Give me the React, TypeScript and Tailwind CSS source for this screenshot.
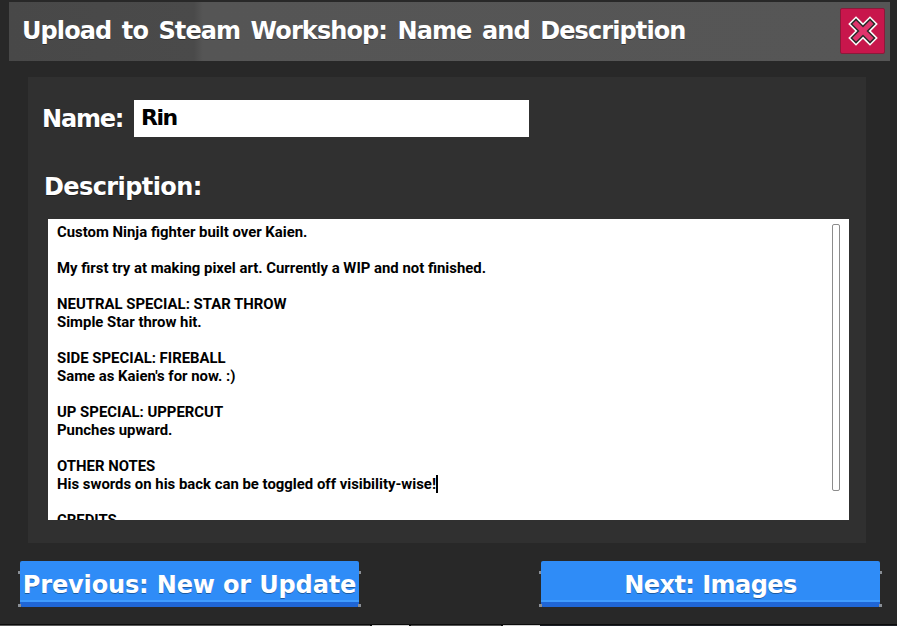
import React from 'react';

const pixelFont = "font-['DejaVu_Sans',sans-serif] font-bold [text-shadow:0_1px_0_rgba(0,0,0,0.35)]";

const descriptionLines = [
  'Custom Ninja fighter built over Kaien.',
  '',
  'My first try at making pixel art. Currently a WIP and not finished.',
  '',
  'NEUTRAL SPECIAL: STAR THROW',
  'Simple Star throw hit.',
  '',
  'SIDE SPECIAL: FIREBALL',
  "Same as Kaien's for now. :)",
  '',
  'UP SPECIAL: UPPERCUT',
  'Punches upward.',
  '',
  'OTHER NOTES',
];

const PixelButton = ({ label, tracking }: { label: string; tracking: string }) => (
  <button className="relative h-[46px] w-[339px] bg-[#2f8cf7] rounded-[2px] border-b-[5px] border-[#1f66d6] flex items-center justify-center">
    <span className={`${pixelFont} text-white text-[24px] leading-none whitespace-nowrap pt-[6px] ${tracking}`}>{label}</span>
    <span className="absolute left-0 right-0 bottom-0 h-[2px] bg-[#3f9cff]" />
    <span className="absolute -left-[2px] top-[10px] w-[2px] h-[3px] bg-[#8a8f96]" />
    <span className="absolute -right-[2px] top-[10px] w-[2px] h-[3px] bg-[#8a8f96]" />
    <span className="absolute -left-[2px] -bottom-[5px] w-[3px] h-[3px] bg-[#8a8f96]" />
    <span className="absolute -right-[2px] -bottom-[5px] w-[3px] h-[3px] bg-[#8a8f96]" />
  </button>
);

export default function App() {
  return (
    <div className="w-[897px] h-[626px] bg-[#282828] overflow-hidden flex flex-col">
      {/* Title bar */}
      <div className="mt-[2px] ml-[9px] mr-[7px] h-[59px] shrink-0 flex items-center justify-between pl-[13px] pr-[5px] bg-[linear-gradient(90deg,#484848_0%,#4a4a4a_21%,#555555_22%,#565656_100%)]">
        <span className={`${pixelFont} text-white text-[24px] leading-none whitespace-nowrap tracking-[-0.9px] [word-spacing:3px] pb-[2px]`}>
          Upload to Steam Workshop: Name and Description
        </span>
        <div className="w-[45px] h-[46px] mb-[1px] bg-[#c8164c] border border-[#8a1a3a] rounded-[2px] flex items-center justify-center">
          <svg width="30" height="30" viewBox="0 0 30 30" fill="none">
            <path d="M8 8 L22 22 M22 8 L8 22" stroke="#ffffff" strokeWidth="11" strokeLinecap="square" />
            <path d="M8 8 L22 22 M22 8 L8 22" stroke="#2b2b2b" strokeWidth="8" strokeLinecap="square" />
            <path d="M8 8 L22 22 M22 8 L8 22" stroke="#e0346c" strokeWidth="5" strokeLinecap="square" />
          </svg>
        </div>
      </div>

      {/* Main panel */}
      <div className="mt-[16px] ml-[28px] w-[838px] h-[466px] shrink-0 bg-[#303030] pt-[23px] pl-[14px]">
        <div className="flex items-center h-[37px]">
          <span className={`${pixelFont} text-white text-[24px] leading-none w-[92px] tracking-[-1.2px]`}>Name:</span>
          <div className={`${pixelFont} w-[395px] h-[37px] bg-white text-black text-[22px] leading-[36px] pl-[7px] tracking-[-1.5px] [text-shadow:none]`}>Rin</div>
        </div>
        <div className={`${pixelFont} text-white text-[24px] leading-none mt-[38px] ml-[2px] tracking-[-0.6px]`}>Description:</div>
        <div className="relative mt-[20px] ml-[6px] w-[801px] h-[301px] bg-white overflow-hidden pl-[9px] font-['Roboto',sans-serif] font-bold text-[14.9px] leading-[18px] text-black">
          <div className="mt-[4px]">
            {descriptionLines.map((line, i) => (
              <div key={i} className="h-[18px] whitespace-nowrap">{line}</div>
            ))}
            <div className="h-[18px] whitespace-nowrap">
              His swords on his back can be toggled off visibility-wise!
              <span className="inline-block w-[2px] h-[18px] bg-black align-top" />
            </div>
            <div className="h-[18px]" />
            <div className="h-[18px] whitespace-nowrap">CREDITS</div>
          </div>
          <div className="absolute right-[9px] top-[5px] w-[8px] h-[267px] bg-white border border-[#8c8c8c] rounded-[2px]" />
        </div>
      </div>

      {/* Footer buttons */}
      <div className="mt-[18px] ml-[20px] w-[860px] flex justify-between">
        <PixelButton label="Previous: New or Update" tracking="tracking-[-0.15px]" />
        <PixelButton label="Next: Images" tracking="tracking-[-0.55px]" />
      </div>

      {/* Edge of what lies behind the window */}
      <div className="mt-auto h-[1px] shrink-0 bg-[#0c0c0c]" />
      <div className="h-[1px] shrink-0 flex bg-[#1c1f26]">
        <div className="w-[370px] bg-[#5a5a5a]" />
        <div className="w-[2px] bg-[#0c0c0c]" />
        <div className="w-[37px] bg-[#d0d0d0]" />
        <div className="w-[2px] bg-[#0c0c0c]" />
        <div className="w-[90px] bg-[#555555]" />
        <div className="w-[2px] bg-[#0c0c0c]" />
        <div className="w-[37px] bg-[#d0d0d0]" />
      </div>
    </div>
  );
}
